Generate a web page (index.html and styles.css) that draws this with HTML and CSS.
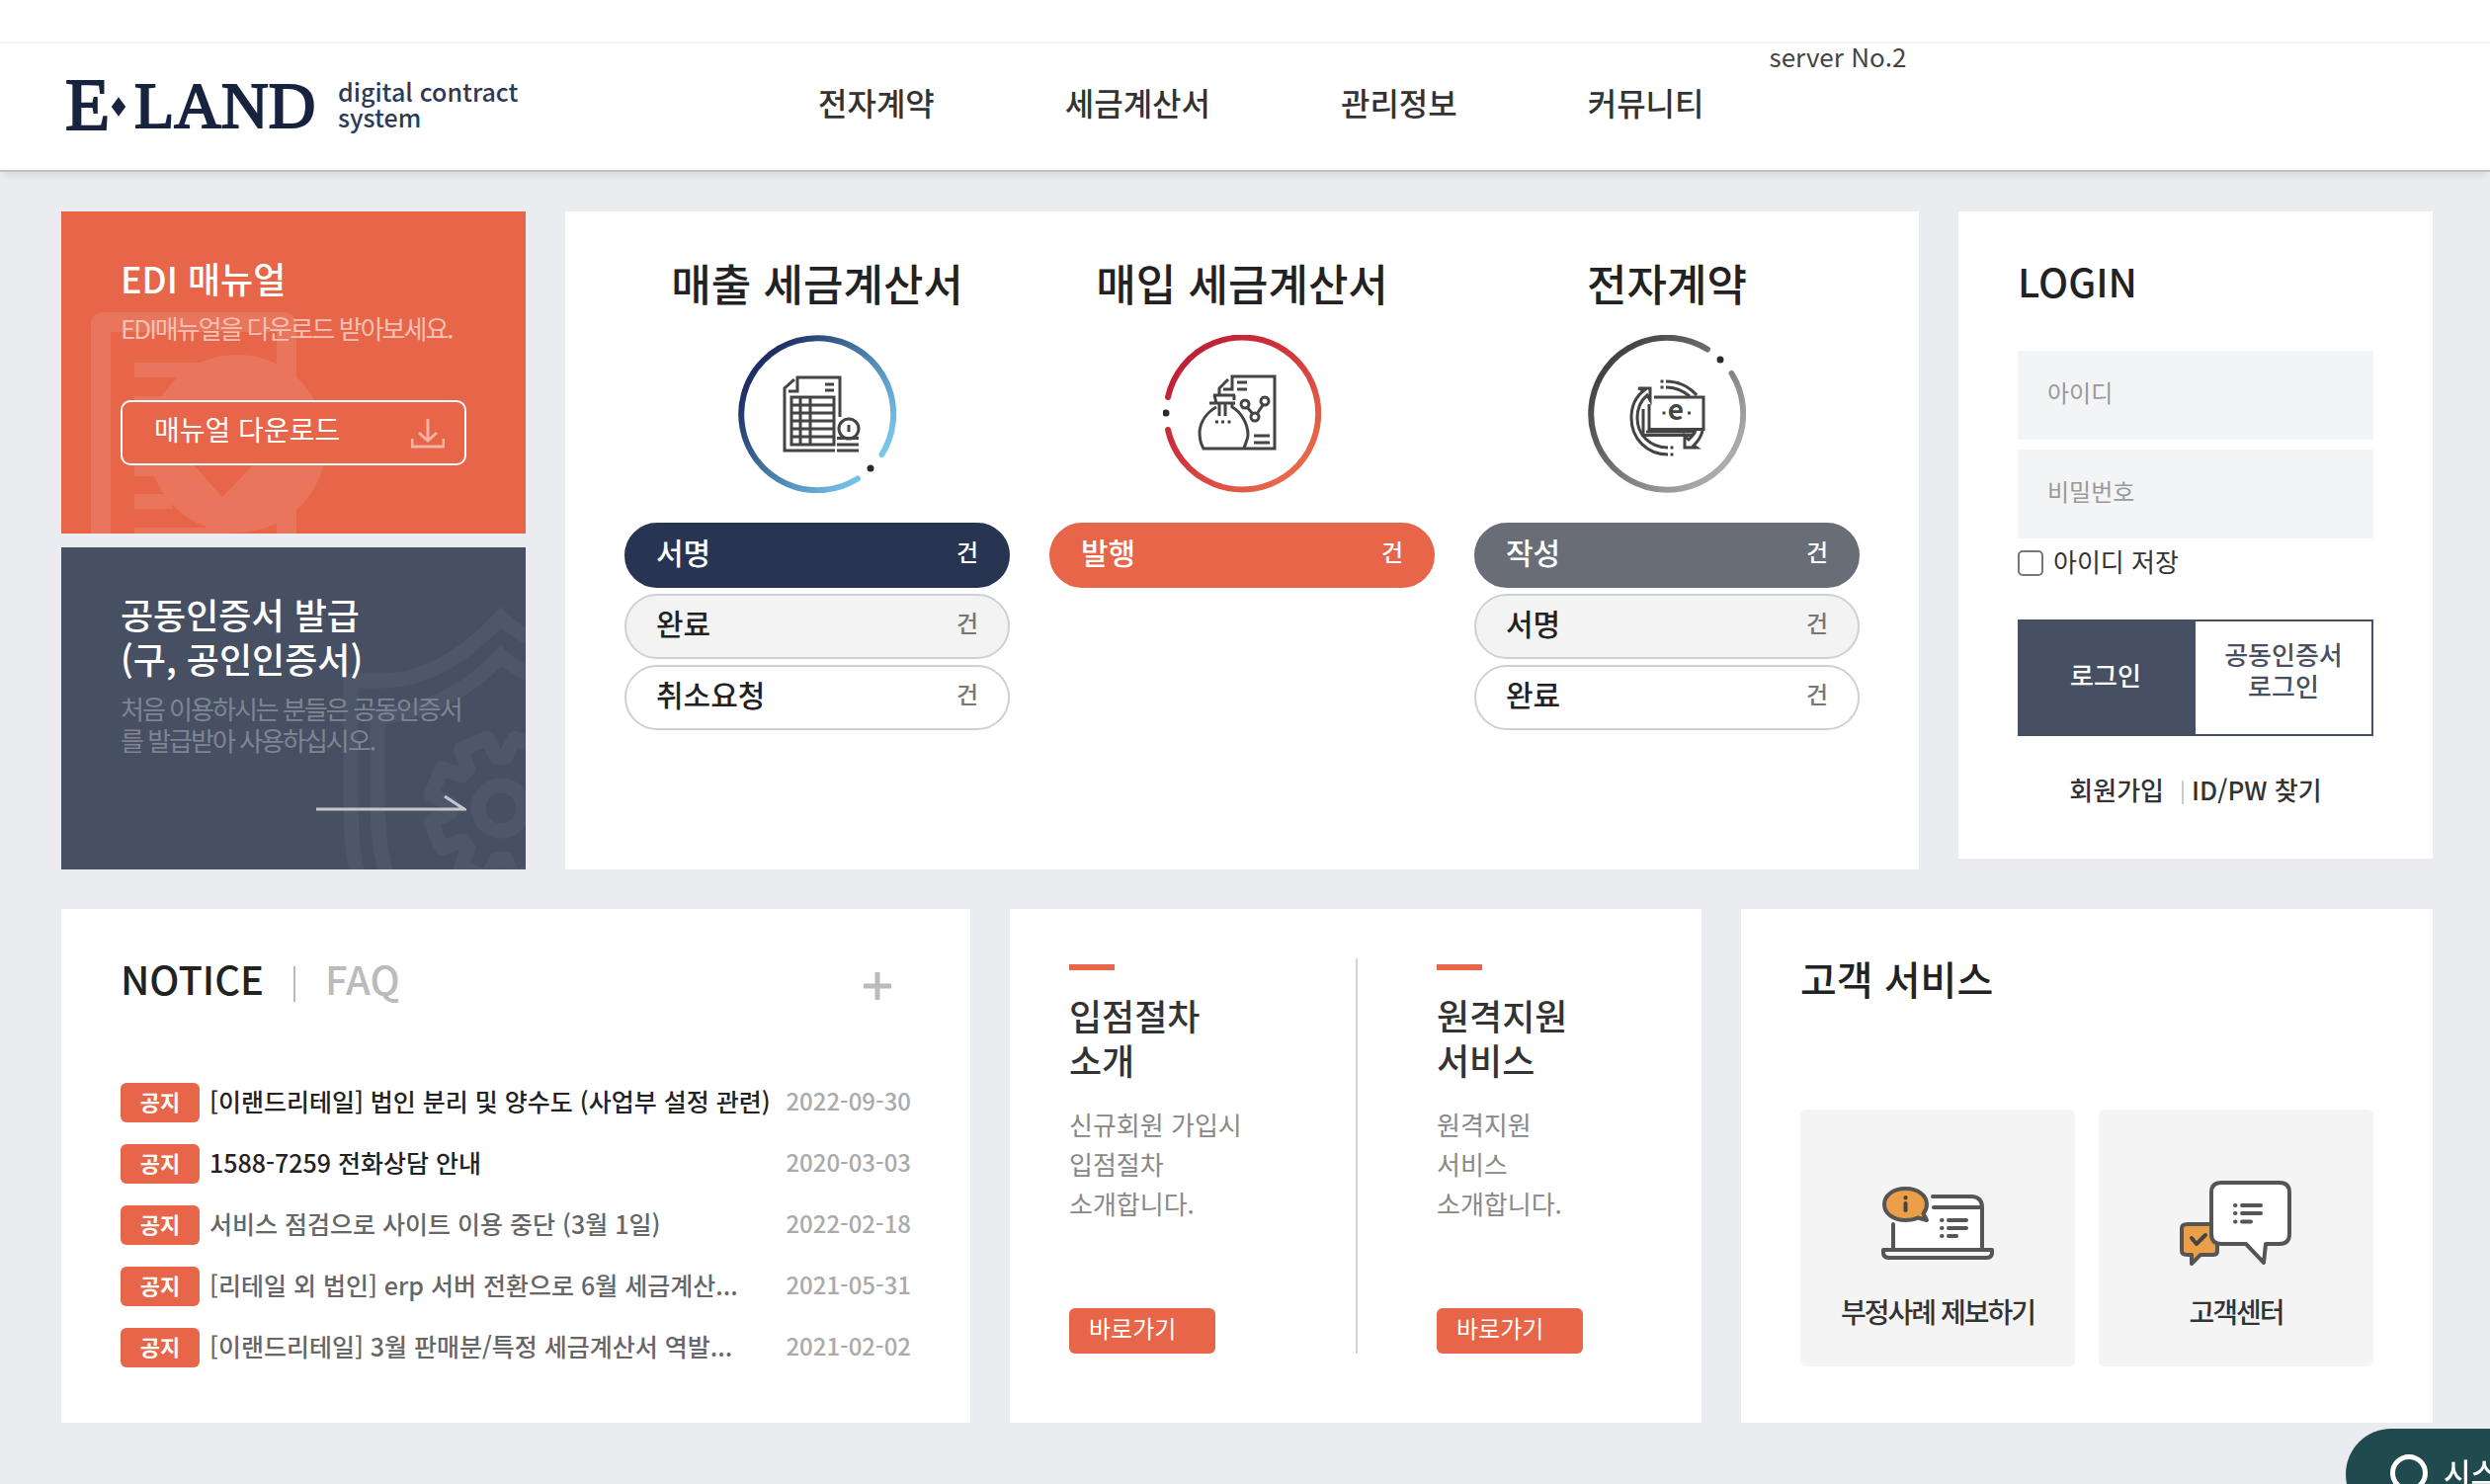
FILE: index.html
```html
<!DOCTYPE html>
<html lang="ko">
<head>
<meta charset="utf-8">
<title>E·LAND digital contract system</title>
<meta name="viewport" content="width=device-width, initial-scale=1">
<link rel="stylesheet" href="styles.css">
</head>
<body>
<div class="topbar"></div>
<header class="header">
  <a class="logo" href="#">
    <svg class="logo-mark" viewBox="0 0 256 60" width="256" height="60" role="img" aria-label="E·LAND">
      <text x="0" y="53" font-size="74">E</text>
      <path d="M54 22l6 8-6 8-6-8z"/>
      <text x="70" y="51" font-size="66">LAND</text>
    </svg>
    <span class="logo-text">digital contract<br>system</span>
  </a>
  <nav class="nav">
    <a href="#">전자계약</a>
    <a href="#">세금계산서</a>
    <a href="#">관리정보</a>
    <a href="#">커뮤니티</a>
  </nav>
  <span class="server">server No.2</span>
</header>

<main class="main">
  <div class="row row-top">
    <div class="side">
      <section class="banner banner-manual">
        <svg class="banner-bg" viewBox="0 0 470 326" width="470" height="326" aria-hidden="true">
          <g opacity=".1" fill="#fff">
            <path d="M30 326V114a12 12 0 0 1 12-12H226a12 12 0 0 1 12 12V326H218V122H50V326ZM74 153H150V168H74ZM74 187H112V202H74ZM74 220H95V235H74ZM74 253H95V268H74ZM74 286H112V301H74ZM74 320H170V326H74Z"/>
            <path d="M178 145a90 90 0 1 1 0 180a90 90 0 1 1 0-180ZM132 254L163 289L197 254Z" fill-rule="evenodd"/>
          </g>
        </svg>
        <h2>EDI 매뉴얼</h2>
        <p class="tight">EDI매뉴얼을 다운로드 받아보세요.</p>
        <button type="button" class="download">매뉴얼 다운로드
          <svg viewBox="0 0 34 30" width="34" height="30" aria-hidden="true"><path d="M1 20V28H33V20M17 0V22M8 14L17 22L26 14"/></svg>
        </button>
      </section>
      <section class="banner banner-cert">
        <svg class="banner-bg" viewBox="0 0 470 326" width="470" height="326" aria-hidden="true">
          <g opacity=".04" fill="none" stroke="#fff" stroke-width="15">
            <path d="M293 250V135H325C372 135 415 104 445 71C456 82 465 87 480 95M293 250C293 290 295 320 304 345"/>
            <path d="M320 250V171C372 168 415 142 445 110C456 120 465 125 480 131M320 250C320 290 323 315 334 345"/>
            <circle cx="445" cy="264" r="23"/>
            <path transform="translate(445 264)" stroke-linejoin="round" d="M51.800 4.500L70.700 13.700L59.700 40.300L39.800 33.400L33.400 39.800L40.300 59.700L13.700 70.700L4.500 51.800L-4.500 51.800L-13.700 70.700L-40.300 59.700L-33.400 39.800L-39.800 33.400L-59.700 40.300L-70.700 13.700L-51.800 4.500L-51.800-4.500L-70.700-13.700L-59.700-40.300L-39.800-33.400L-33.400-39.800L-40.300-59.700L-13.700-70.700L-4.500-51.800L4.500-51.800L13.700-70.700L40.300-59.700L33.400-39.800L39.800-33.400L59.700-40.300L70.700-13.700L51.800-4.500Z"/>
          </g>
        </svg>
        <h2>공동인증서 발급<br>(구, 공인인증서)</h2>
        <p class="tight">처음 이용하시는 분들은 공동인증서를 발급받아 사용하십시오.</p>
        <a class="arrow" href="#" aria-label="공동인증서 발급">
          <svg viewBox="0 0 152 18" width="152" height="18" aria-hidden="true"><path d="M0 15H150L130 2"/></svg>
        </a>
      </section>
    </div>

    <section class="card status">
      <div class="status-col">
        <h2>매출 세금계산서</h2>
        <svg class="ring" viewBox="0 0 160 160" width="160" height="160" aria-hidden="true">
          <defs><linearGradient id="blue" x1=".1" y1=".25" x2=".9" y2=".85"><stop offset="0" stop-color="#1f2f66"/><stop offset=".45" stop-color="#457ba6"/><stop offset="1" stop-color="#7ccbf2"/></linearGradient></defs>
          <path class="arc" stroke="url(#blue)" d="M121 145.500A77 77 0 1 1 145.500 121"/>
          <circle class="dot" cx="134" cy="135" r="3.500"/>
          <g class="glyph">
            <path d="M103 83V43H60V57H51M57 45L47 54V117H98"/>
            <path d="M54 63H97V111H54ZM63 63V111M73 63V111M54 71H97M54 79H97M54 87H97M54 95H97M54 103H97M88 50H97M88 56H97"/>
            <circle cx="112" cy="95" r="10"/><path d="M112 91V98M100 104.500H122M100 111H122M100 117H122"/>
          </g>
        </svg>
        <ul class="pills">
          <li><a class="pill navy" href="#"><strong>서명</strong><span>건</span></a></li>
          <li><a class="pill gray" href="#"><strong>완료</strong><span>건</span></a></li>
          <li><a class="pill" href="#"><strong>취소요청</strong><span>건</span></a></li>
        </ul>
      </div>
      <div class="status-col">
        <h2>매입 세금계산서</h2>
        <svg class="ring" viewBox="0 0 160 160" width="160" height="160" aria-hidden="true">
          <defs><linearGradient id="red" x1=".1" y1=".2" x2=".8" y2=".9"><stop offset="0" stop-color="#bf2238"/><stop offset=".4" stop-color="#d0343b"/><stop offset="1" stop-color="#e9684a"/></linearGradient></defs>
          <path class="arc" stroke="url(#red)" d="M5 63A77 77 0 1 1 5 96"/>
          <circle class="dot" cx="3" cy="79" r="3.500"/>
          <g class="glyph">
            <path d="M61 55H70V42H113V115H41C38 110 37 104 37 98C38 87 45 78 54 73M66 45L57 54V61M75 48H85M75 55H85"/>
            <path d="M51 61H73M47 69H73M52 61L54 69M72 61V66M70 69V73C79 78 86 90 86 101C86 106 83 110 82 115M57 69V82M63 69V82"/>
            <path d="M53 88H56M59 88H62M65.500 88H68.500M92 102H108M92 109H108M85 73L91 80M95 80L101 71"/>
            <circle cx="83" cy="70" r="4"/><circle cx="93" cy="83" r="4"/><circle cx="103" cy="67" r="4"/>
          </g>
        </svg>
        <ul class="pills">
          <li><a class="pill orange" href="#"><strong>발행</strong><span>건</span></a></li>
        </ul>
      </div>
      <div class="status-col">
        <h2>전자계약</h2>
        <svg class="ring" viewBox="0 0 160 160" width="160" height="160" aria-hidden="true">
          <defs><linearGradient id="slate" x1=".1" y1=".2" x2=".85" y2=".85"><stop offset="0" stop-color="#434343"/><stop offset=".4" stop-color="#6a6a6a"/><stop offset="1" stop-color="#ababab"/></linearGradient></defs>
          <path class="arc" stroke="url(#slate)" d="M145.500 39A77 77 0 1 1 121 14.500"/>
          <circle class="dot" cx="134" cy="25" r="3.500"/>
          <g class="glyph">
            <path d="M67 63H117V95.500H62V70M56 75V101.500H106M59 98H108"/>
            <path d="M79 47C92 47 102 52 110 61M79 53C89 53 97 57 103 62M73.500 47H76.500M73.500 53H76.500"/>
            <path d="M81 121C60 121 44 105 44 84C44 72 49 62 57 56L51 54H63V66L60 61C53 67 50 75 50 84C50 101 63 114 81 114M83.500 114H86.500M83.500 121H86.500"/>
            <path d="M116 97C115 102 112 107 107 112L110 114H98V102L102 106C105 103 108 100 109 97M75.500 79H78.500M101 79H104"/>
          </g>
          <text class="ring-e" x="89" y="86" text-anchor="middle">e</text>
        </svg>
        <ul class="pills">
          <li><a class="pill slate" href="#"><strong>작성</strong><span>건</span></a></li>
          <li><a class="pill gray" href="#"><strong>서명</strong><span>건</span></a></li>
          <li><a class="pill" href="#"><strong>완료</strong><span>건</span></a></li>
        </ul>
      </div>
    </section>

    <form class="card login">
      <h2 class="title">LOGIN</h2>
      <div class="fields">
        <input type="text" class="field" placeholder="아이디" aria-label="아이디">
        <input type="password" class="field" placeholder="비밀번호" aria-label="비밀번호">
      </div>
      <div class="save"><input type="checkbox" id="save-id"><label for="save-id">아이디 저장</label></div>
      <div class="login-buttons">
        <button type="submit" class="login-btn primary">로그인</button>
        <button type="button" class="login-btn">공동인증서<br>로그인</button>
      </div>
      <div class="login-links"><a href="#">회원가입</a><a href="#">ID/PW 찾기</a></div>
    </form>
  </div>

  <div class="row row-bottom">
    <section class="card notice">
      <div class="notice-head">
        <h2 class="title"><a href="#">NOTICE</a></h2>
        <h2 class="title muted"><a href="#">FAQ</a></h2>
        <a class="more" href="#" aria-label="더보기"><svg viewBox="0 0 28 28" width="28" height="28" aria-hidden="true"><path d="M0 14H28M14 0V28"/></svg></a>
      </div>
      <ul class="notice-list">
        <li><span class="badge">공지</span><a class="strong" href="#">[이랜드리테일] 법인 분리 및 양수도 (사업부 설정 관련)</a><time>2022-09-30</time></li>
        <li><span class="badge">공지</span><a class="strong" href="#">1588-7259 전화상담 안내</a><time>2020-03-03</time></li>
        <li><span class="badge">공지</span><a href="#">서비스 점검으로 사이트 이용 중단 (3월 1일)</a><time>2022-02-18</time></li>
        <li><span class="badge">공지</span><a href="#">[리테일 외 법인] erp 서버 전환으로 6월 세금계산...</a><time>2021-05-31</time></li>
        <li><span class="badge">공지</span><a href="#">[이랜드리테일] 3월 판매분/특정 세금계산서 역발...</a><time>2021-02-02</time></li>
      </ul>
    </section>

    <section class="card guide">
      <div class="guide-col">
        <h3>입점절차<br>소개</h3>
        <p>신규회원 가입시<br>입점절차<br>소개합니다.</p>
        <a class="go" href="#">바로가기</a>
      </div>
      <div class="guide-col">
        <h3>원격지원<br>서비스</h3>
        <p>원격지원<br>서비스<br>소개합니다.</p>
        <a class="go" href="#">바로가기</a>
      </div>
    </section>

    <section class="card service">
      <h2 class="title">고객 서비스</h2>
      <div class="tiles">
        <a class="tile" href="#">
          <svg viewBox="0 0 114 86" width="114" height="86" aria-hidden="true">
            <g transform="translate(0 6)" fill="none" stroke="#555" stroke-width="4" stroke-linecap="round" stroke-linejoin="round">
              <path d="M12 62V20H50L52 10H92Q102 11 102 21V62Z" fill="#fff" stroke="none"/>
              <path d="M12 38V62M52 10H92Q102 11 102 21V62M53 21H101"/>
              <path d="M2 64H112V67Q112 72 106 72H8Q2 72 2 67Z" fill="#f4f4f4"/>
              <path d="M46 34L37 31.500C33 33.500 29 34 24.500 34C12 34 3 27 3 18S12 2 24.500 2S46 9 46 18C46 22 44.500 25 42.500 27.500Z" fill="#eb9f49"/>
              <path d="M24.500 11V11.500M24.500 17V24" stroke="#444"/>
              <path d="M61 34H61.500M68 34H86M61 42H61.500M68 42H86M61 50H61.500M68 50H76"/>
            </g>
          </svg>
          <span class="tight">부정사례 제보하기</span>
        </a>
        <a class="tile" href="#">
          <svg viewBox="0 0 114 86" width="114" height="86" aria-hidden="true">
            <g fill="none" stroke="#555" stroke-width="4" stroke-linecap="round" stroke-linejoin="round">
              <path d="M8 44H34Q38 44 38 48V71Q38 75 34 75H21L12 84V75H8Q2 75 2 71V48Q2 44 8 44Z" fill="#eb9f49"/>
              <path d="M12 58L17 64L26 55" stroke="#444"/>
              <path d="M42 2H101Q111 2 111 12V54Q111 64 101 64H87L85 83L67 64H42Q32 64 32 54V12Q32 2 42 2Z" fill="#fff"/>
              <path d="M56 25H56.500M63 25H82M56 33H56.500M63 33H82M56 41.500H56.500M63 41.500H72"/>
            </g>
          </svg>
          <span class="tight">고객센터</span>
        </a>
      </div>
    </section>
  </div>
</main>

<button type="button" class="chat">
  <svg viewBox="0 0 38 38" width="38" height="38" aria-hidden="true"><circle cx="19" cy="19" r="16.500"/></svg>
  <span>시스</span>
</button>
</body>
</html>
```

FILE: styles.css
```css
*, *::before, *::after { box-sizing: border-box; }

body {
  margin: 0;
  min-height: 100vh;
  background: #ebecf0;
  color: #222;
  font-family: "Noto Sans CJK KR", "Noto Sans", sans-serif;
  font-size: 26px;
  line-height: 32px;
}

h2, h3, p, ul { margin: 0; padding: 0; font-weight: 500; }
ul { list-style: none; }
a { color: inherit; text-decoration: none; }
button, input { font: inherit; color: inherit; }
button { cursor: pointer; }

/* header */
.topbar { height: 42px; background: #fff; }

.header {
  display: flex;
  align-items: flex-start;
  min-height: 132px;
  padding-left: 66px;
  background: #fff;
  border-top: 2px solid #f4f4f4;
  border-bottom: 2px solid #c0c1c3;
  box-shadow: 0 8px 8px -4px rgba(0, 0, 0, .08);
}

.logo {
  display: flex;
  gap: 20px;
  width: 762px;
  padding-top: 34px;
}
.logo-mark {
  overflow: visible;
  fill: #17233f;
  stroke: #17233f;
  stroke-width: 2;
  font-family: "Liberation Serif", serif;
}
.logo-text { padding-top: 1px; font-size: 25px; line-height: 26px; font-weight: 500; color: #2d3956; }

.nav { display: flex; gap: 132px; padding-top: 35px; font-size: 32px; line-height: 48px; font-weight: 500; color: #333; }
.server { margin-left: 66px; color: #444; line-height: 26px; }

/* page grid */
.main { padding: 40px 58px 62px 62px; }
.row { display: grid; gap: 40px; }
.row-top { grid-template-columns: 470fr 1370fr 480fr; }
.row-bottom { grid-template-columns: 920fr 700fr 700fr; margin-top: 40px; }
.card { background: #fff; padding: 40px 60px; min-width: 0; }
.title { font-size: 40px; line-height: 60px; }
.tight { letter-spacing: -2px; }

/* left banners */
.side { display: flex; flex-direction: column; gap: 14px; }
.banner {
  position: relative;
  overflow: hidden;
  min-height: 326px;
  padding: 45px 60px 0;
  color: #fff;
}
.banner > * { position: relative; }
.banner > .banner-bg { position: absolute; left: 0; top: 0; }
.banner h2 { font-size: 36px; line-height: 45px; font-weight: 500; }
.banner p { margin-top: 12px; font-weight: 400; }
.banner-manual { background: #e76549; }
.banner-manual p { color: #f6c1b5; }
.banner-cert { background: #475063; }
.banner-cert p { color: #7e8591; }

.download {
  display: flex;
  justify-content: space-between;
  align-items: center;
  width: 100%;
  height: 66px;
  margin-top: 57px;
  padding: 0 20px 8px 32px;
  border: 2px solid #fff;
  border-radius: 10px;
  background: #e76549;
  font-size: 28px;
  line-height: 54px;
}
.download svg { margin-top: 10px; fill: none; stroke: #f3b2a4; stroke-width: 3; }
.arrow { display: flex; justify-content: flex-end; margin-top: 39px; }
.arrow svg { fill: none; stroke: #c4c8ce; stroke-width: 3; }

/* status */
.status { display: grid; grid-template-columns: repeat(3, 1fr); gap: 40px; }
.status-col { display: flex; flex-direction: column; align-items: center; }
.status-col h2 { font-size: 44px; line-height: 64px; }
.ring { margin: 21px 0 30px; }
.arc { fill: none; stroke-width: 6; stroke-linecap: round; }
.dot { fill: #2a2a2a; }
.glyph { fill: none; stroke: #444; stroke-width: 3; }
.ring-e { fill: #444; font-size: 28px; font-weight: 700; }

.pills { display: flex; flex-direction: column; gap: 6px; width: 100%; }
.pill {
  display: flex;
  justify-content: space-between;
  align-items: center;
  height: 66px;
  padding: 0 30px 8px;
  border: 2px solid #ccd1d6;
  border-radius: 33px;
}
.pill strong { font-size: 30px; font-weight: 500; }
.pill span { font-size: 24px; color: #777; }
.pill.gray { background: #f3f3f3; }
.pill.navy { background: #283552; border-color: #283552; color: #fff; }
.pill.orange { background: #e76549; border-color: #e76549; color: #fff; }
.pill.slate { background: #696d78; border-color: #696d78; color: #fff; }
.pill.navy span, .pill.orange span, .pill.slate span { color: #fff; }

/* login */
.login { align-self: start; padding-bottom: 54px; }
.fields { display: grid; gap: 10px; margin-top: 41px; }
.field {
  width: 100%;
  height: 90px;
  padding: 0 30px 8px;
  border: 0;
  border-radius: 0;
  background: #f3f4f6;
  font-size: 24px;
}
.field::placeholder { color: #999; }
.save { display: flex; align-items: center; gap: 10px; height: 40px; margin-top: 4px; color: #333; }
.save input {
  appearance: none;
  width: 26px;
  height: 26px;
  margin: 2px 0 0;
  border: 2px solid #767676;
  border-radius: 5px;
  background: #fff;
}
.save input:checked { background: #475063; }
.save label { padding-bottom: 2px; }
.login-buttons { display: grid; grid-template-columns: 1fr 1fr; margin-top: 38px; }
.login-btn {
  height: 118px;
  padding: 0 0 16px;
  border: 2px solid #475063;
  border-left-width: 0;
  background: #fff;
  color: #475063;
  font-weight: 500;
}
.login-btn.primary { padding-bottom: 6px; background: #475063; color: #fff; }
.login-links { display: flex; justify-content: center; margin-top: 38px; color: #333; font-weight: 500; }
.login-links a + a { display: flex; align-items: center; }
.login-links a + a::before { content: ""; width: 2px; height: 24px; margin: 6px 8px 0 18px; background: #ccc; }

/* notice */
.notice-head { display: flex; align-items: center; }
.notice-head .muted { display: flex; align-items: center; color: #bbb; }
.notice-head .muted::before { content: ""; width: 2px; height: 36px; margin: 12px 30px 0; background: #bbb; }
.more { margin: 16px 20px 0 auto; line-height: 0; }
.more svg { fill: none; stroke: #bbb; stroke-width: 5; }
.notice-list { display: grid; grid-template-columns: minmax(0, 1fr); gap: 22px; margin-top: 76px; padding-bottom: 16px; }
.notice-list li { display: flex; align-items: center; height: 40px; white-space: nowrap; }
.notice-list a { flex: 1; min-width: 0; padding-bottom: 4px; font-size: 25px; color: #666; }
.notice-list a.strong { color: #222; font-weight: 500; }
.notice-list time { padding-bottom: 4px; font-size: 24px; color: #aaa; }
.badge {
  flex: none;
  width: 80px;
  height: 40px;
  margin-right: 10px;
  padding-bottom: 4px;
  border-radius: 6px;
  background: #e76549;
  color: #fff;
  font-size: 22px;
  line-height: 36px;
  font-weight: 700;
  text-align: center;
}

/* guide */
.guide { display: grid; grid-template-columns: 1fr 1fr; padding: 50px 60px 70px; }
.guide-col { display: flex; flex-direction: column; align-items: flex-start; padding-top: 6px; }
.guide-col + .guide-col { padding-left: 80px; border-left: 2px solid #d3d3d3; }
.guide-col::before { content: ""; width: 46px; height: 6px; background: #e76549; }
.guide h3 { margin-top: 23px; font-size: 36px; line-height: 45px; color: #333; }
.guide p { margin-top: 23px; line-height: 40px; font-weight: 400; color: #888; }
.go {
  width: 148px;
  height: 46px;
  margin-top: auto;
  padding-left: 20px;
  border-radius: 6px;
  background: #e76549;
  color: #fff;
  font-size: 24px;
  line-height: 40px;
}

/* customer service */
.tiles { display: grid; grid-template-columns: 1fr 1fr; gap: 24px; margin-top: 103px; }
.tile {
  display: flex;
  flex-direction: column;
  align-items: center;
  gap: 26px;
  min-height: 260px;
  padding-top: 72px;
  border-radius: 6px;
  background: #f4f4f4;
  color: #333;
  font-size: 28px;
  line-height: 40px;
  font-weight: 500;
}

/* floating chat button, runs off the corner of the window */
.chat {
  position: fixed;
  right: 0;
  bottom: -36px;
  display: flex;
  gap: 16px;
  width: 146px;
  height: 92px;
  padding: 26px 0 0 45px;
  overflow: hidden;
  border: 0;
  border-radius: 46px 0 0 46px;
  background: #214a4f;
  color: #fff;
  font-size: 30px;
  line-height: 34px;
  font-weight: 500;
}
.chat svg { flex: none; fill: none; stroke: #fff; stroke-width: 5; }
.chat span { white-space: nowrap; }
```
